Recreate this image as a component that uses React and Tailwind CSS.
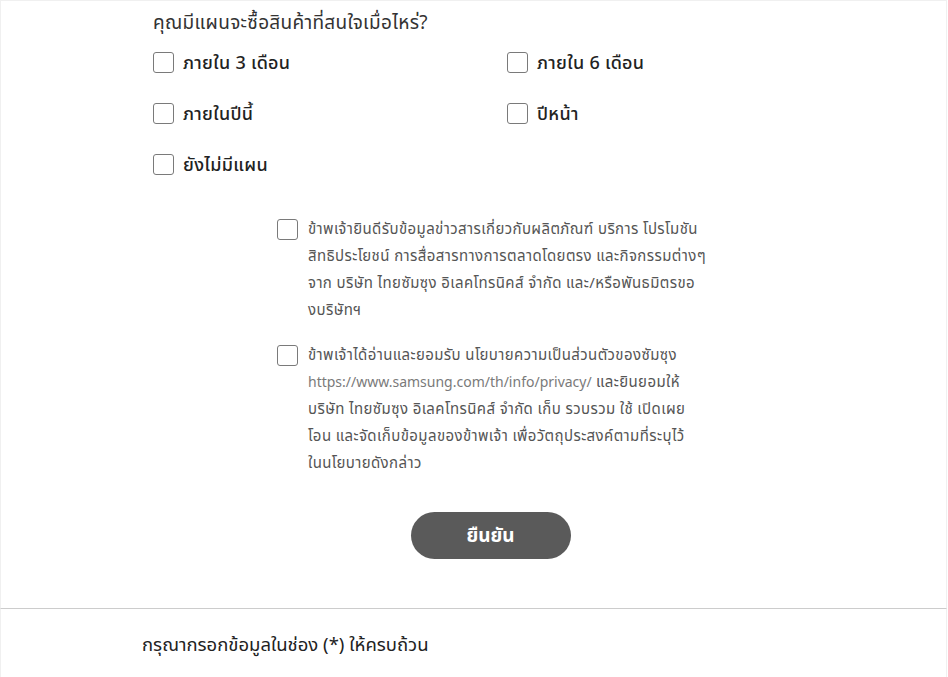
const periodOptions = [
  ['ภายใน 3 เดือน', 'ภายใน 6 เดือน'],
  ['ภายในปีนี้', 'ปีหน้า'],
  ['ยังไม่มีแผน', null],
];

const newsConsent = [
  'ข้าพเจ้ายินดีรับข้อมูลข่าวสารเกี่ยวกับผลิตภัณฑ์ บริการ โปรโมชัน',
  'สิทธิประโยชน์ การสื่อสารทางการตลาดโดยตรง และกิจกรรมต่างๆ',
  'จาก บริษัท ไทยซัมซุง อิเลคโทรนิคส์ จำกัด และ/หรือพันธมิตรขอ',
  'งบริษัทฯ',
];

const privacyConsent = [
  'ข้าพเจ้าได้อ่านและยอมรับ นโยบายความเป็นส่วนตัวของซัมซุง',
  <>
    <span className="tracking-normal text-[14px] text-[#7a7a7a]">https://www.samsung.com/th/info/privacy/</span> และยินยอมให้
  </>,
  'บริษัท ไทยซัมซุง อิเลคโทรนิคส์ จำกัด เก็บ รวบรวม ใช้ เปิดเผย',
  'โอน และจัดเก็บข้อมูลของข้าพเจ้า เพื่อวัตถุประสงค์ตามที่ระบุไว้',
  'ในนโยบายดังกล่าว',
];

const Box = ({ className = '' }) => (
  <span className={`block w-[21px] h-[21px] shrink-0 rounded-[3px] border border-[#7a7a7a] bg-white ${className}`} />
);

const Option = ({ label }) => (
  <label className="flex items-center gap-[9px] cursor-pointer">
    <Box />
    <span className="text-[18px] leading-[24px] font-medium tracking-[0.3px] text-[#222]">{label}</span>
  </label>
);

const Consent = ({ lines }) => (
  <label className="flex items-start gap-[10px] cursor-pointer">
    <Box className="mt-[1px]" />
    <span className="-mt-[3px] text-[15px] leading-[27px] tracking-[0.4px] text-[#555] whitespace-nowrap">
      {lines.map((line, i) => (
        <span key={i} className="block">{line}</span>
      ))}
    </span>
  </label>
);

export default function App() {
  return (
    <div
      className="w-[948px] h-[677px] overflow-hidden bg-white"
      style={{ fontFamily: '"Noto Sans", "Noto Sans Thai", Tahoma, sans-serif' }}
    >
      <div className="border-x border-t border-[#f0f0f0] mr-[1px]">
        {/* Purchase plan */}
        <div className="pl-[152px] pt-[9px]">
          <p className="text-[19px] leading-[24px] tracking-[0.3px] text-[#333]">คุณมีแผนจะซื้อสินค้าที่สนใจเมื่อไหร่?</p>
          <div className="mt-[16px] flex flex-col gap-[27px]">
            {periodOptions.map((row, i) => (
              <div key={i} className="grid grid-cols-[354px_1fr]">
                <Option label={row[0]} />
                {row[1] && <Option label={row[1]} />}
              </div>
            ))}
          </div>
        </div>

        {/* Consents */}
        <div className="pl-[276px] mt-[42px] flex flex-col gap-[21px]">
          <Consent lines={newsConsent} />
          <Consent lines={privacyConsent} />
        </div>

        <div className="flex justify-center pl-[34px] mt-[36px] pb-[49px]">
          <button className="w-[160px] h-[47px] rounded-full bg-[#5a5a5a] text-white text-[19px] font-bold">
            ยืนยัน
          </button>
        </div>
      </div>

      {/* Footer note */}
      <div className="border-t border-[#cccccc] border-x border-x-[#f0f0f0] mr-[1px] h-[80px] pl-[141px] pt-[23px]">
        <p className="text-[18.5px] leading-[24px] text-[#222]">กรุณากรอกข้อมูลในช่อง (*) ให้ครบถ้วน</p>
      </div>
    </div>
  );
}
